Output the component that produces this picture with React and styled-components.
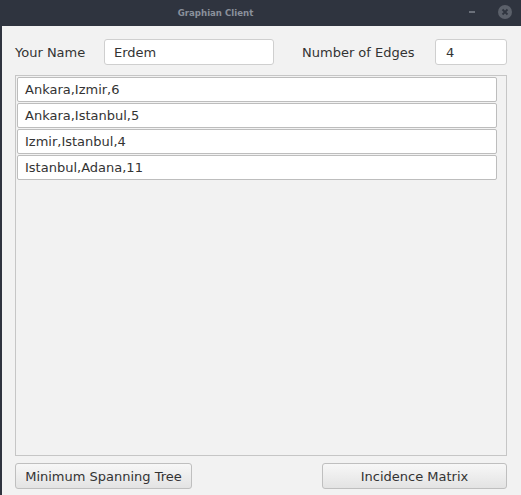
import React from 'react';
import styled, { createGlobalStyle } from 'styled-components';

const GlobalStyle = createGlobalStyle`
  html, body { margin: 0; padding: 0; background: #f2f2f2; }
  body { font-family: "DejaVu Sans", sans-serif; }
`;

const Window = styled.div`
  width: 521px;
  height: 495px;
  display: flex;
  flex-direction: column;
  border-left: 2px solid #2f343f;
  box-sizing: border-box;
  background: #f2f2f2;
  overflow: hidden;
`;

const TitleBar = styled.div`
  height: 26px;
  flex: none;
  background: #2f343f;
  position: relative;
  display: flex;
  align-items: center;
  justify-content: center;
`;

const Title = styled.div`
  font-family: "DejaVu Sans", sans-serif;
  font-weight: bold;
  font-size: 8.6px;
  color: #8a909b;
  margin-left: -92px;
  margin-top: -1px;
`;

const Controls = styled.div`
  position: absolute;
  right: 9px;
  top: 5px;
  display: flex;
  align-items: center;
  gap: 23px;
`;

const Minimize = styled.div`
  width: 6px;
  height: 2px;
  background: #6b707a;
`;

const Close = styled.div`
  width: 14px;
  height: 14px;
  border-radius: 50%;
  background: #5b606a;
  display: flex;
  align-items: center;
  justify-content: center;
`;

const Body = styled.div`
  flex: 1;
  display: flex;
  flex-direction: column;
  padding: 13px 14px 8px 13px;
`;

const TopRow = styled.div`
  display: flex;
  align-items: center;
  height: 26px;
`;

const Label = styled.span`
  font-size: 13px;
  color: #333;
  width: ${p => p.$w}px;
  flex: none;
`;

const Field = styled.div`
  box-sizing: border-box;
  height: 26px;
  width: ${p => p.$w}px;
  border: 1px solid #cfcfcf;
  border-radius: 3px;
  background: #fff;
  font-size: 13px;
  color: #333;
  padding-left: ${p => p.$pl}px;
  display: flex;
  align-items: center;
  flex: none;
`;

const Spacer = styled.div`
  width: ${p => p.$w}px;
  flex: none;
`;

const ListPanel = styled.div`
  margin-top: 10px;
  height: 381px;
  box-sizing: border-box;
  border: 1px solid #c6c6c6;
  background: #f2f2f2;
  padding: 1px 9px 0 1px;
  display: flex;
  flex-direction: column;
  gap: 1px;
`;

const ListRow = styled.div`
  box-sizing: border-box;
  height: 25px;
  border: 1px solid #bdbdbd;
  border-radius: 2px;
  background: #fff;
  font-size: 13px;
  color: #333;
  padding-left: 7px;
  display: flex;
  align-items: center;
`;

const ButtonRow = styled.div`
  margin-top: 7px;
  display: flex;
  justify-content: space-between;
`;

const Button = styled.button`
  box-sizing: border-box;
  height: 26px;
  width: ${p => p.$w}px;
  border: 1px solid #bfbfbf;
  border-radius: 3px;
  background: linear-gradient(#f7f7f7, #e3e3e3);
  font-family: "DejaVu Sans", sans-serif;
  font-size: 13px;
  color: #333;
  padding: 0;
`;

const edges = ['Ankara,Izmir,6', 'Ankara,Istanbul,5', 'Izmir,Istanbul,4', 'Istanbul,Adana,11'];

export default function App() {
  return (
    <>
      <GlobalStyle />
      <Window>
        <TitleBar>
          <Title>Graphian Client</Title>
          <Controls>
            <Minimize />
            <Close>
              <svg width="8" height="8" viewBox="0 0 8 8">
                <path d="M1.5 1.5 L6.5 6.5 M6.5 1.5 L1.5 6.5" stroke="#2f343f" strokeWidth="1.8" />
              </svg>
            </Close>
          </Controls>
        </TitleBar>
        <Body>
          <TopRow>
            <Label $w={89}>Your Name</Label>
            <Field $w={170} $pl={9}>Erdem</Field>
            <Spacer $w={28} />
            <Label $w={133}>Number of Edges</Label>
            <Field $w={72} $pl={10}>4</Field>
          </TopRow>
          <ListPanel>
            {edges.map(e => (
              <ListRow key={e}>{e}</ListRow>
            ))}
          </ListPanel>
          <ButtonRow>
            <Button $w={177}>Minimum Spanning Tree</Button>
            <Button $w={185}>Incidence Matrix</Button>
          </ButtonRow>
        </Body>
      </Window>
    </>
  );
}
